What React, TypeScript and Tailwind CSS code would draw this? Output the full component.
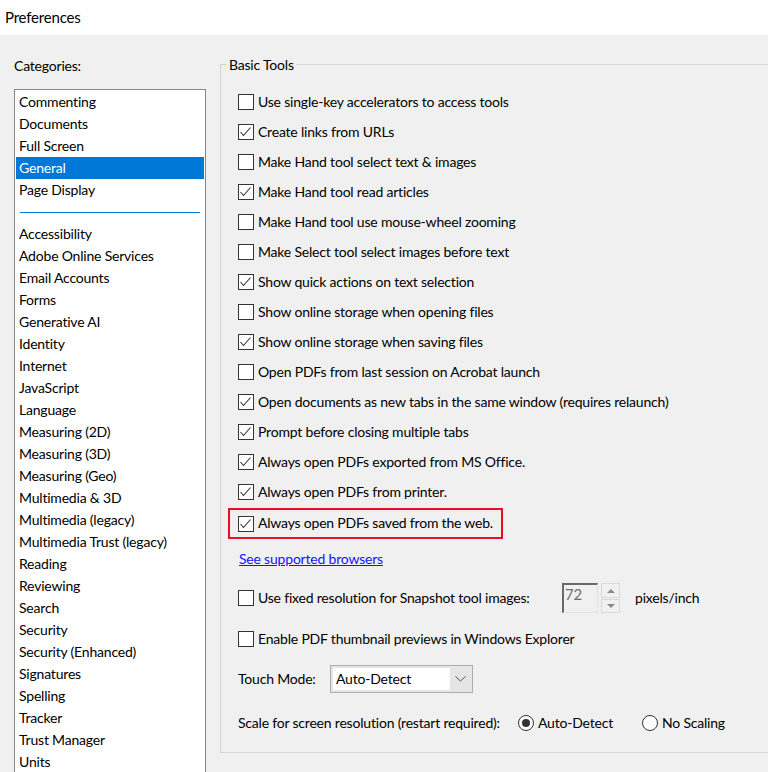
const categoriesTop = ['Commenting', 'Documents', 'Full Screen', 'General', 'Page Display'];
const categoriesBottom = [
  'Accessibility',
  'Adobe Online Services',
  'Email Accounts',
  'Forms',
  'Generative AI',
  'Identity',
  'Internet',
  'JavaScript',
  'Language',
  'Measuring (2D)',
  'Measuring (3D)',
  'Measuring (Geo)',
  'Multimedia & 3D',
  'Multimedia (legacy)',
  'Multimedia Trust (legacy)',
  'Reading',
  'Reviewing',
  'Search',
  'Security',
  'Security (Enhanced)',
  'Signatures',
  'Spelling',
  'Tracker',
  'Trust Manager',
  'Units',
];

const options: [string, boolean][] = [
  ['Use single-key accelerators to access tools', false],
  ['Create links from URLs', true],
  ['Make Hand tool select text & images', false],
  ['Make Hand tool read articles', true],
  ['Make Hand tool use mouse-wheel zooming', false],
  ['Make Select tool select images before text', false],
  ['Show quick actions on text selection', true],
  ['Show online storage when opening files', false],
  ['Show online storage when saving files', true],
  ['Open PDFs from last session on Acrobat launch', false],
  ['Open documents as new tabs in the same window (requires relaunch)', true],
  ['Prompt before closing multiple tabs', true],
  ['Always open PDFs exported from MS Office.', true],
  ['Always open PDFs from printer.', true],
];

function Checkbox({ checked }: { checked: boolean }) {
  return (
    <div className="flex h-[16px] w-[16px] shrink-0 items-center justify-center border border-[#333333] bg-white">
      {checked && (
        <svg width="14" height="14" viewBox="0 0 14 14" fill="none">
          <path d="M1.5 7 L4.5 10.5 L11.5 2.5" stroke="#333333" strokeWidth="1.1" />
        </svg>
      )}
    </div>
  );
}

function Radio({ checked }: { checked: boolean }) {
  return (
    <div className="flex h-[16px] w-[16px] shrink-0 items-center justify-center rounded-full border border-[#333333] bg-white">
      {checked && <div className="h-[8px] w-[8px] rounded-full bg-[#333333]" />}
    </div>
  );
}

export default function App() {
  return (
    <div
      className="h-[772px] w-[768px] overflow-hidden bg-[#f0f0f0] text-[14px] tracking-[-0.2px] text-black"
      style={{ fontFamily: 'Lato, "Open Sans", sans-serif' }}
    >
      <div className="flex h-[35px] items-center bg-white pb-px pl-[5px] text-[15px]">Preferences</div>
      <div className="flex">
        <div className="ml-[14px] flex w-[192px] shrink-0 flex-col pt-[20px]">
          <div className="flex h-[22px] items-center pb-[2px]">Categories:</div>
          <div className="mt-[12px] h-[700px] border border-[#828790] bg-white px-px pt-px">
            {categoriesTop.map((c) => (
              <div
                key={c}
                className={
                  c === 'General'
                    ? 'flex h-[22px] items-center bg-[#0078d7] pb-[2px] pl-[3px] text-white'
                    : 'flex h-[22px] items-center pb-[2px] pl-[3px]'
                }
              >
                {c}
              </div>
            ))}
            <div className="flex h-[22px] items-center px-[4px]">
              <div className="h-px w-full bg-[#0078d7]" />
            </div>
            {categoriesBottom.map((c) => (
              <div key={c} className="flex h-[22px] items-center pb-[2px] pl-[3px]">
                {c}
              </div>
            ))}
          </div>
        </div>

        <div className="relative ml-[14px] mt-[29px] h-[689px] w-[580px] shrink-0 border border-[#d5d5d5]">
          <div className="absolute left-[6px] top-[-9px] bg-[#f0f0f0] px-[2px] leading-[18px]">Basic Tools</div>
          <div className="flex flex-col pt-[22px]">
            {options.map(([label, checked]) => (
              <div key={label} className="flex h-[30px] items-center gap-[4px] pl-[17px]">
                <Checkbox checked={checked} />
                <span className="mb-[2px]">{label}</span>
              </div>
            ))}
            <div className="ml-[7px] mt-[1px] flex h-[31px] w-[275px] items-center gap-[4px] border-2 border-[#e81123] pl-[8px]">
              <Checkbox checked />
              <span className="mb-[2px]">Always open PDFs saved from the web.</span>
            </div>
            <div className="mt-[9px] flex h-[22px] items-center pb-[2px] pl-[18px]">
              <a className="text-[#1414ff] underline" href="#">
                See supported browsers
              </a>
            </div>
            <div className="mt-[13px] flex h-[30px] items-center pl-[17px]">
              <div className="flex w-[324px] items-center gap-[4px]">
                <Checkbox checked={false} />
                <span className="mb-[2px]">Use fixed resolution for Snapshot tool images:</span>
              </div>
              <div className="flex h-[30px] w-[36px] items-start border-b border-l-2 border-r border-t-2 border-b-[#e3e3e3] border-l-[#6a6a6a] border-r-[#e3e3e3] border-t-[#6a6a6a] bg-[#f0f0f0] pl-[1px] text-[15px] leading-[18px] text-[#6d6d6d]">
                72
              </div>
              <div className="ml-[3px] flex h-[30px] w-[19px] flex-col justify-between">
                <div className="flex h-[15px] items-center justify-center border border-[#d9d9d9] bg-[#f0f0f0]">
                  <svg width="8" height="5" viewBox="0 0 8 5">
                    <path d="M0 5 L4 1 L8 5 Z" fill="#8a8a8a" />
                  </svg>
                </div>
                <div className="flex h-[14px] items-center justify-center border border-[#d9d9d9] bg-[#f0f0f0]">
                  <svg width="8" height="5" viewBox="0 0 8 5">
                    <path d="M0 0 L8 0 L4 4 Z" fill="#8a8a8a" />
                  </svg>
                </div>
              </div>
              <span className="mb-[2px] ml-[15px]">pixels/inch</span>
            </div>
            <div className="mt-[11px] flex h-[30px] items-center gap-[4px] pl-[17px]">
              <Checkbox checked={false} />
              <span className="mb-[2px]">Enable PDF thumbnail previews in Windows Explorer</span>
            </div>
            <div className="mt-[11px] flex h-[28px] items-center pl-[17px]">
              <span className="mb-[2px] w-[92px]">Touch Mode:</span>
              <div className="flex h-[28px] w-[143px] items-center border border-[#adadad] bg-[#e5e5e5] p-[2px]">
                <div className="flex h-[22px] w-[117px] items-center bg-white pb-[2px] pl-[3px]">Auto-Detect</div>
                <div className="flex flex-1 items-center justify-center">
                  <svg width="11" height="6" viewBox="0 0 11 6" fill="none">
                    <path d="M0.5 0.5 L5.5 5 L10.5 0.5" stroke="#555555" strokeWidth="1" />
                  </svg>
                </div>
              </div>
            </div>
            <div className="mt-[15px] flex h-[30px] items-center pl-[17px]">
              <span className="mb-[2px] w-[280px]">Scale for screen resolution (restart required):</span>
              <div className="flex w-[124px] items-center gap-[4px]">
                <Radio checked />
                <span className="mb-[2px]">Auto-Detect</span>
              </div>
              <div className="flex items-center gap-[4px]">
                <Radio checked={false} />
                <span className="mb-[2px]">No Scaling</span>
              </div>
            </div>
          </div>
        </div>
      </div>
    </div>
  );
}
